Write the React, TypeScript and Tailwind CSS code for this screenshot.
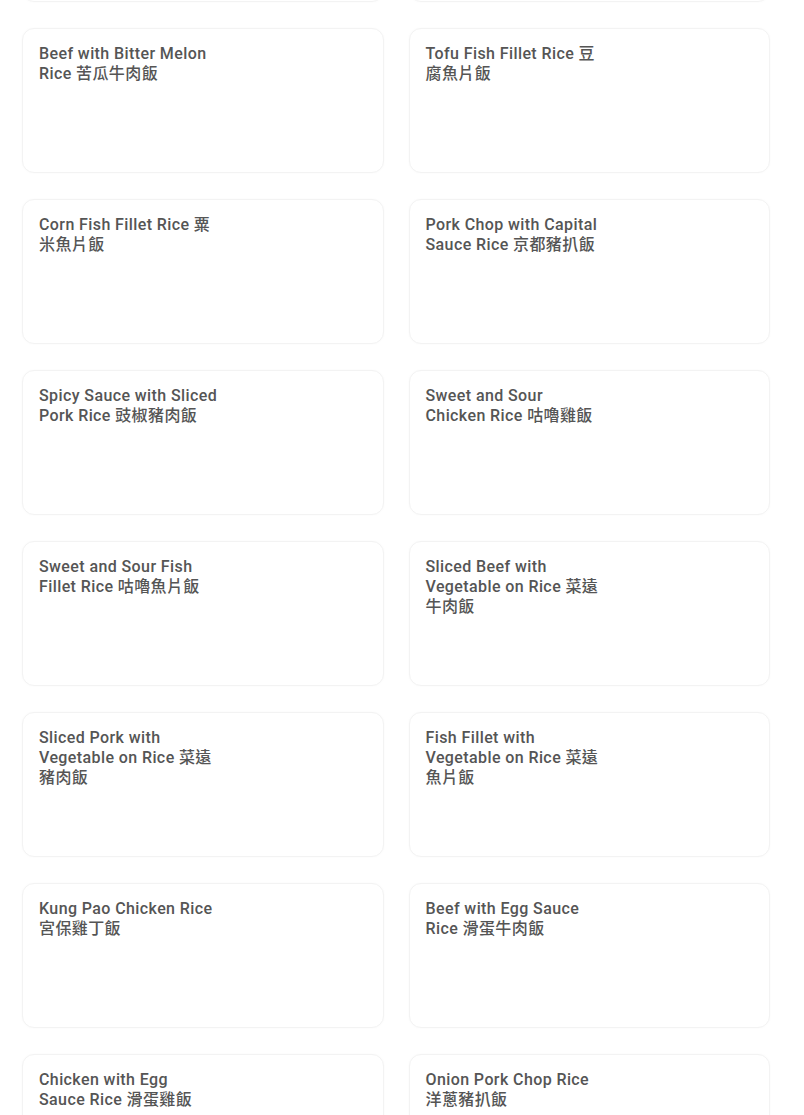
const dishes: string[] = [
  'Beef with Bitter Melon Rice 苦瓜牛肉飯',
  'Tofu Fish Fillet Rice 豆腐魚片飯',
  'Corn Fish Fillet Rice 粟米魚片飯',
  'Pork Chop with Capital Sauce Rice 京都豬扒飯',
  'Spicy Sauce with Sliced Pork Rice 豉椒豬肉飯',
  'Sweet and Sour Chicken Rice 咕嚕雞飯',
  'Sweet and Sour Fish Fillet Rice 咕嚕魚片飯',
  'Sliced Beef with Vegetable on Rice 菜遠牛肉飯',
  'Sliced Pork with Vegetable on Rice 菜遠豬肉飯',
  'Fish Fillet with Vegetable on Rice 菜遠魚片飯',
  'Kung Pao Chicken Rice 宮保雞丁飯',
  'Beef with Egg Sauce Rice 滑蛋牛肉飯',
  'Chicken with Egg Sauce Rice 滑蛋雞飯',
  'Onion Pork Chop Rice 洋蔥豬扒飯',
]

function DishCard({ name }: { name?: string }) {
  return (
    <div className="h-[145px] rounded-xl border border-[#f3f3f3] bg-white px-4 pt-[15px] shadow-[0_0_3px_rgba(0,0,0,0.025)]">
      {name && (
        <div className="w-[178.5px] text-[16px] leading-5 font-medium text-[#555555] tracking-[0.4px]">
          {name}
        </div>
      )}
    </div>
  )
}

export default function App() {
  return (
    <div
      className="min-h-screen overflow-hidden bg-white"
      style={{ fontFamily: 'Roboto, "Noto Sans CJK TC", sans-serif' }}
    >
      {/* list is scrolled: the row above is only peeking in at the top */}
      <div className="mt-[-143px] grid grid-cols-2 gap-x-[25px] gap-y-[26px] pl-[22px] pr-[34px] pb-6">
        <DishCard />
        <DishCard />
        {dishes.map(d => (
          <DishCard key={d} name={d} />
        ))}
      </div>
    </div>
  )
}
